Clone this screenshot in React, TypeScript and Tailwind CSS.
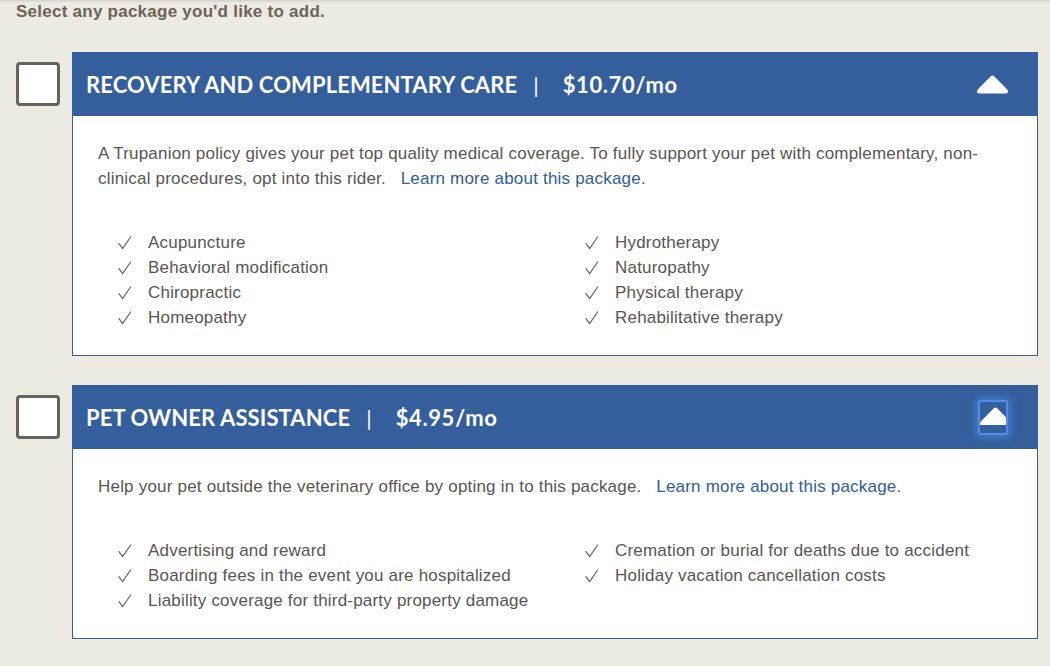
import React from "react";

interface Pkg {
    title: string;
    price: string;
    blurb: string;
    left: string[];
    right: string[];
    focused?: boolean;
}

const packages: Pkg[] = [
    {
        title: "RECOVERY AND COMPLEMENTARY CARE",
        price: "$10.70/mo",
        blurb: "A Trupanion policy gives your pet top quality medical coverage. To fully support your pet with complementary, non-clinical procedures, opt into this rider.",
        left: ["Acupuncture", "Behavioral modification", "Chiropractic", "Homeopathy"],
        right: ["Hydrotherapy", "Naturopathy", "Physical therapy", "Rehabilitative therapy"],
    },
    {
        title: "PET OWNER ASSISTANCE",
        price: "$4.95/mo",
        blurb: "Help your pet outside the veterinary office by opting in to this package.",
        left: ["Advertising and reward", "Boarding fees in the event you are hospitalized", "Liability coverage for third-party property damage"],
        right: ["Cremation or burial for deaths due to accident", "Holiday vacation cancellation costs"],
        focused: true,
    },
];

const Arrow = () => (
    <svg width="31" height="19" viewBox="0 0 31 19">
        <path d="M13.6 1.4 Q15.5 -0.4 17.4 1.4 L29.6 13.8 Q31 15.2 31 16.6 Q31 18.5 29 18.5 L2 18.5 Q0 18.5 0 16.6 Q0 15.2 1.4 13.8 Z" fill="#fff" />
    </svg>
);

const Check = () => (
    <svg width="14" height="14" viewBox="0 0 14 14" className="mr-[16px] shrink-0">
        <path d="M1 7.6 L4.6 12.6 L12.6 1" fill="none" stroke="#6a655e" strokeWidth="1.2" strokeLinecap="round" strokeLinejoin="round" />
    </svg>
);

const CheckList = ({ items }: { items: string[] }) => (
    <ul>
        {items.map((it) => (
            <li key={it} className="flex h-[25px] items-center">
                <Check />
                <span>{it}</span>
            </li>
        ))}
    </ul>
);

const PackageRow = ({ pkg }: { pkg: Pkg }) => (
    <div className="flex items-start">
        <div className="flex h-[64px] w-[72px] shrink-0 items-center pl-[16px]">
            <div className="h-[44px] w-[44px] rounded-[4px] border-[3px] border-[#67635a] bg-white" />
        </div>
        <div className="w-[966px]">
            <div className="flex h-[64px] items-center bg-[#345e9c] pl-[14px] pr-[30px] text-white">
                <span className="font-['Lato',sans-serif] text-[22px] font-bold tracking-[0.1px]">{pkg.title}</span>
                <span className="ml-[16px] mr-[24px] font-['Lato',sans-serif] text-[22px]">|</span>
                <span className="font-['Lato',sans-serif] text-[22px] font-bold tracking-[0.6px]">{pkg.price}</span>
                <div className="ml-auto">
                    {pkg.focused ? (
                        <div className="flex h-[35px] w-[30px] items-start justify-center rounded-[2px] border-2 border-[#4d8ee6] pt-[5px] shadow-[0_0_8px_2px_rgba(80,150,240,0.6)]">
                            <div className="h-[18px] overflow-hidden">
                                <Arrow />
                            </div>
                        </div>
                    ) : (
                        <Arrow />
                    )}
                </div>
            </div>
            <div className="border border-t-0 border-[#345e9c] bg-white px-[25px] pt-[25px] pb-[25px] text-[17px] leading-[25px] tracking-[0.2px] text-[#5a5550]">
                <p>
                    {pkg.blurb}&nbsp;&nbsp; <span className="text-[#2e5d9f]">Learn more about this package</span>.
                </p>
                <div className="mt-[39px] grid grid-cols-[467px_1fr] pl-[20px]">
                    <CheckList items={pkg.left} />
                    <CheckList items={pkg.right} />
                </div>
            </div>
        </div>
    </div>
);

export default function App() {
    return (
        <div className="min-h-[666px] bg-[#edeae2] font-['Liberation_Sans',Arial,sans-serif] shadow-[inset_0_3px_3px_-2px_rgba(0,0,0,0.15)]">
            <div className="pl-[16px] pt-[2px] text-[17px] font-bold leading-[20px] tracking-[0.25px] text-[#6b645a]">Select any package you'd like to add.</div>
            <div className="mt-[30px] flex flex-col gap-[29px]">
                {packages.map((p) => (
                    <PackageRow key={p.title} pkg={p} />
                ))}
            </div>
        </div>
    );
}
